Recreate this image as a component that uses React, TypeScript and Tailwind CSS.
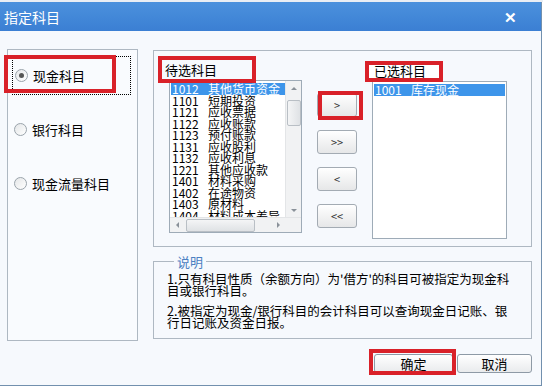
const font = { fontFamily: '"Noto Sans CJK SC", "Noto Sans", sans-serif' };

const candidates: [string, string][] = [
  ["1012", "其他货币资金"],
  ["1101", "短期投资"],
  ["1121", "应收票据"],
  ["1122", "应收账款"],
  ["1123", "预付账款"],
  ["1131", "应收股利"],
  ["1132", "应收利息"],
  ["1221", "其他应收款"],
  ["1401", "材料采购"],
  ["1402", "在途物资"],
  ["1403", "原材料"],
  ["1404", "材料成本差异"],
];

function Radio({ checked, label }: { checked?: boolean; label: string }) {
  return (
    <div className="flex items-center gap-[5px] h-[16px]">
      <span className="h-[13px] w-[13px] rounded-full border border-[#9aa3ab] bg-gradient-to-br from-[#e4e6e8] to-white flex items-center justify-center">
        {checked && <span className="h-[5px] w-[5px] rounded-full bg-[#555]" />}
      </span>
      <span className="text-[13px] leading-none text-black">{label}</span>
    </div>
  );
}

function MoveButton({ text }: { text: string }) {
  return (
    <button className="h-[24px] w-[40px] rounded-[3px] border border-[#a3abb3] bg-gradient-to-b from-white to-[#e6e7e8] text-[11px] text-[#333] leading-none flex items-center justify-center">
      {text}
    </button>
  );
}

function Arrow({ dir }: { dir: "up" | "down" | "left" | "right" }) {
  const cls = {
    up: "border-l-[3px] border-r-[3px] border-b-[3px] border-l-transparent border-r-transparent border-b-[#8a9199]",
    down: "border-l-[3px] border-r-[3px] border-t-[3px] border-l-transparent border-r-transparent border-t-[#8a9199]",
    left: "border-t-[3px] border-b-[3px] border-r-[3px] border-t-transparent border-b-transparent border-r-[#8a9199]",
    right: "border-t-[3px] border-b-[3px] border-l-[3px] border-t-transparent border-b-transparent border-l-[#8a9199]",
  }[dir];
  return <span className={`w-0 h-0 ${cls}`} />;
}

export default function App() {
  return (
    <div className="w-[543px] h-[387px] bg-white overflow-hidden relative" style={font}>
      <div className="h-[2px] bg-[#e9eef4]" />
      <div className="w-[542px] h-[384px] border-r border-b border-[#7290ae] flex flex-col bg-[#f6f9fd]">
        {/* title bar */}
        <div className="h-[29px] shrink-0 bg-gradient-to-b from-[#4b91dd] to-[#3b7fd3] flex items-center justify-between pl-[4px] pr-[24px]">
          <span className="text-white text-[14px] leading-none">指定科目</span>
          <span className="text-white text-[15px] font-bold leading-none">✕</span>
        </div>

        <div className="flex-1 flex pt-[18px] pl-[7px]">
          {/* left radio group */}
          <div className="relative w-[131px] h-[292px] border border-[#aeb8c2] bg-[#f9fbfe] shrink-0">
            <div className="absolute left-[4px] top-[6px] w-[119px] h-[39px] border border-dotted border-black" />
            <div className="pt-[17px] pl-[6px] flex flex-col gap-[38px]">
              <div className="pl-[1px]">
                <Radio checked label="现金科目" />
              </div>
              <Radio label="银行科目" />
              <Radio label="现金流量科目" />
            </div>
            <div className="absolute left-[-4px] top-[5px] w-[112px] h-[38px] border-[4px] border-[#d92129]" />
          </div>

          {/* right column */}
          <div className="ml-[15px] w-[379px] flex flex-col">
            <div className="relative h-[197px] mt-[1px] border border-[#aeb8c2] flex pl-[15px] pt-[29px]">
              {/* candidate list */}
              <div className="relative">
                <div className="absolute left-[-4px] top-[-17px] text-[13px] leading-none">待选科目</div>
                <div className="absolute left-[-11px] top-[-24px] w-[98px] h-[27px] border-[4px] border-[#d92129]" />
                <div className="w-[133px] h-[153px] border border-[#9eabb7] bg-white flex flex-col">
                  <div className="flex flex-1 min-h-0">
                    <div className="flex-1 overflow-hidden pt-[2px] pl-[1px]">
                      {candidates.map(([code, name], i) => (
                        <div
                          key={code}
                          className={`flex h-[11.5px] text-[12px] leading-[11.5px] whitespace-nowrap ${
                            i === 0 ? "bg-[#3d95ea] text-white" : "text-black"
                          }`}
                        >
                          <span className="w-[37px] pl-[1px]">{code}</span>
                          <span>{name}</span>
                        </div>
                      ))}
                    </div>
                    <div className="w-[16px] bg-[#f1f2f3] border-l border-[#e3e5e7] flex flex-col items-center">
                      <div className="h-[14px] flex items-center justify-center">
                        <Arrow dir="up" />
                      </div>
                      <div className="mt-[5px] w-[14px] h-[26px] rounded-[2px] border border-[#b9bfc5] bg-gradient-to-r from-[#f4f5f6] to-[#dfe2e5]" />
                      <div className="flex-1" />
                      <div className="h-[14px] flex items-center justify-center">
                        <Arrow dir="down" />
                      </div>
                    </div>
                  </div>
                  <div className="h-[15px] flex border-t border-[#e3e5e7] bg-[#f1f2f3]">
                    <div className="flex-1 flex items-center">
                      <div className="w-[14px] flex justify-center">
                        <Arrow dir="left" />
                      </div>
                      <div className="ml-[2px] w-[69px] h-[13px] rounded-[2px] border border-[#b9bfc5] bg-gradient-to-b from-[#f4f5f6] to-[#dfe2e5]" />
                      <div className="flex-1" />
                      <div className="w-[14px] flex justify-center">
                        <Arrow dir="right" />
                      </div>
                    </div>
                    <div className="w-[16px] bg-[#f1f2f3]" />
                  </div>
                </div>
              </div>

              {/* move buttons */}
              <div className="relative ml-[15px] mt-[13px] flex flex-col gap-[13px]">
                <MoveButton text=">" />
                <MoveButton text=">>" />
                <MoveButton text="<" />
                <MoveButton text="<<" />
                <div className="absolute left-[1px] top-[-2px] w-[45px] h-[29px] border-[4px] border-[#d92129]" />
              </div>

              {/* selected list */}
              <div className="relative ml-[15px] mt-[1px]">
                <div className="absolute left-[-7px] top-[-20px] w-[78px] h-[21px] border-[4px] border-[#d92129] bg-white" />
                <div className="absolute left-[2px] top-[-17px] text-[13px] leading-none">已选科目</div>
                <div className="w-[135px] h-[158px] border border-[#9eabb7] bg-white pt-[2px] px-[1px]">
                  <div className="flex h-[12px] text-[12px] leading-[12px] bg-[#3d95ea] text-white whitespace-nowrap">
                    <span className="w-[37px] pl-[1px]">1001</span>
                    <span>库存现金</span>
                  </div>
                </div>
              </div>
            </div>

            {/* description */}
            <fieldset className="mt-[8px] h-[84px] border border-[#aeb8c2] pl-[13px] pr-[6px]">
              <legend className="ml-[7px] px-[3px] text-[13px] leading-none text-[#4b80c2]">说明</legend>
              <div className="pt-[5px] text-[12.5px] leading-[12px] text-black whitespace-nowrap">
                <div>1.只有科目性质（余额方向）为'借方'的科目可被指定为现金科</div>
                <div>目或银行科目。</div>
                <div className="mt-[8px]">2.被指定为现金/银行科目的会计科目可以查询现金日记账、银</div>
                <div>行日记账及资金日报。</div>
              </div>
            </fieldset>

            {/* footer buttons */}
            <div className="flex justify-end gap-[4px] mt-[15px]">
              <div className="relative">
                <button className="w-[79px] h-[19px] rounded-[3px] border border-[#8e9aa6] bg-gradient-to-b from-white to-[#e9ebed] text-[13px] leading-none flex items-center justify-center">
                  确定
                </button>
                <div className="absolute left-[-5px] top-[-5px] w-[87px] h-[26px] border-[4px] border-[#d92129]" />
              </div>
              <button className="w-[75px] h-[19px] rounded-[3px] border border-[#8e9aa6] bg-gradient-to-b from-white to-[#e9ebed] text-[13px] leading-none flex items-center justify-center">
                取消
              </button>
            </div>
          </div>
        </div>
      </div>
    </div>
  );
}
